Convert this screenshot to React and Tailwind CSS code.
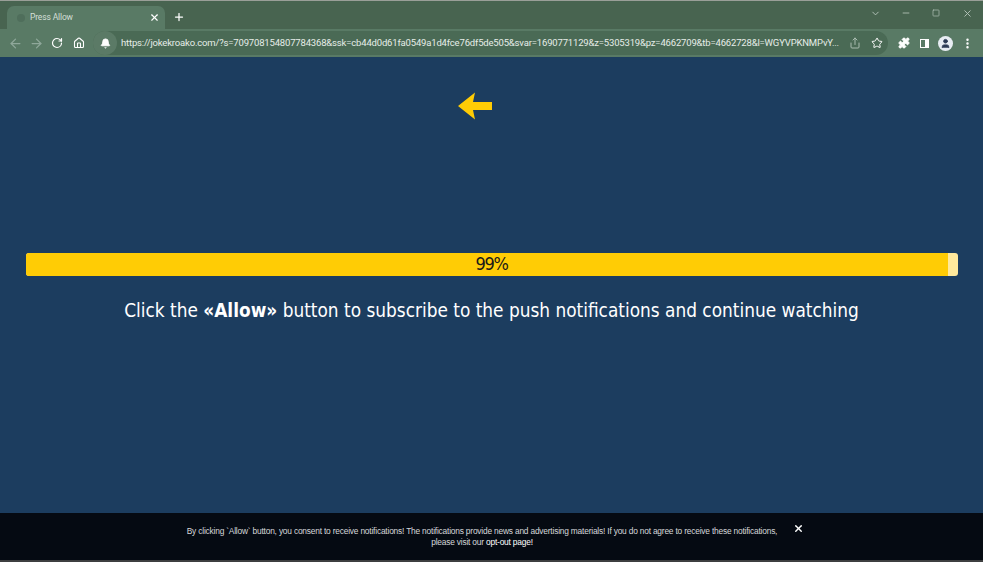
import React from "react";
import { ArrowLeft, ArrowRight, RotateCw, Home, Bell, Star, Share, Puzzle, X, Plus, ChevronDown, Minus, Square, MoreVertical, User } from "lucide-react";

function Toolbar() {
  return (
    <div className="h-[28px] bg-[#597a65] flex items-center shrink-0">
      <div className="flex items-center w-[93px] shrink-0 pl-[8px] gap-[6px]">
        <ArrowLeft className="w-[15px] h-[15px] text-[#8fa89a]" strokeWidth={2} />
        <ArrowRight className="w-[15px] h-[15px] text-[#8fa89a]" strokeWidth={2} />
        <RotateCw className="w-[12px] h-[12px] text-white ml-[1px]" strokeWidth={2.4} />
        <Home className="w-[12px] h-[12px] text-white ml-[4px]" strokeWidth={2.2} />
      </div>
      <div className="w-[795px] shrink-0 h-[24px] rounded-full bg-[#4a6a55] flex items-center">
        <div className="w-[24px] h-[24px] rounded-full bg-[#5b7a66] flex items-center justify-center shrink-0">
          <Bell className="w-[11px] h-[11px] text-white" fill="white" />
        </div>
        <div className="ml-[4px] w-[722px] shrink-0 whitespace-nowrap overflow-hidden text-[9.5px] tracking-[-0.17px] text-[#e6ede8] font-['Roboto',sans-serif]">
          https://jokekroako.com/?s=709708154807784368&amp;ssk=cb44d0d61fa0549a1d4fce76df5de505&amp;svar=1690771129&amp;z=5305319&amp;pz=4662709&amp;tb=4662728&amp;l=WGYVPKNMPvY...
        </div>
        <Share className="w-[12px] h-[12px] text-[#a9bcb0] ml-[6px] shrink-0" />
        <Star className="w-[12px] h-[12px] text-white ml-[10px] shrink-0" />
      </div>
      <div className="flex items-center ml-[10px]">
        <Puzzle className="w-[12px] h-[12px] text-white" fill="white" />
        <div className="w-[9px] h-[9px] ml-[10px] border-[1.5px] border-white border-r-[4px]" />
        <div className="w-[15px] h-[15px] ml-[9px] rounded-full bg-[#e8edf3] flex items-center justify-center">
          <User className="w-[11px] h-[11px] text-[#2c3a55]" fill="#2c3a55" />
        </div>
        <MoreVertical className="w-[13px] h-[13px] text-white ml-[8px]" strokeWidth={2.5} />
      </div>
    </div>
  );
}

export default function App() {
  return (
    <div className="h-[562px] w-[983px] overflow-hidden flex flex-col bg-[#3e3f40] font-['Liberation_Sans',sans-serif]">
      <div className="h-[1px] bg-[#9a9f98] shrink-0" />
      <div className="h-[28px] bg-[#486450] flex items-end shrink-0 pl-[7px]">
        <div className="w-[158px] h-[23px] bg-[#597a65] rounded-t-[7px] flex items-center pl-[10px] pr-[5px] text-[#d3dfd7] text-[8.5px] tracking-[-0.15px] font-['Roboto',sans-serif]">
          <div className="w-[8px] h-[8px] rounded-full bg-[#4f6e5b] mr-[5px] shrink-0" />
          <span className="flex-1">Press Allow</span>
          <X className="w-[11px] h-[11px] text-white" strokeWidth={2.5} />
        </div>
        <Plus className="w-[12px] h-[12px] text-white ml-[8px] mb-[6px]" strokeWidth={2.5} />
        <div className="flex-1 flex items-center justify-end h-full pb-[4px] text-[#b7c6bc]">
          <ChevronDown className="w-[11px] h-[11px] mr-[20px]" />
          <Minus className="w-[10px] h-[10px] mr-[21px]" />
          <Square className="w-[8px] h-[8px] mr-[22px]" />
          <X className="w-[11px] h-[11px] mr-[10px]" />
        </div>
      </div>
      <Toolbar />
      <main className="flex-1 min-h-0 bg-[#1c3d5f] flex flex-col items-center">
        <svg className="w-[34px] h-[28px] mt-[35px] -ml-[33px] shrink-0" viewBox="0 0 34 28">
          <path d="M0 14 L17 0.5 L15 10 H34 V18 H15 L17 27.5 Z" fill="#ffcc05" />
        </svg>
        <div className="relative w-[932px] h-[23px] mt-[133px] shrink-0 rounded-[3px] bg-[#ffe99c] overflow-hidden">
          <div className="h-full w-[99%] bg-[#ffcc05]" />
          <div className="absolute inset-0 flex items-center justify-center pb-[2px] text-[18px] tracking-[-1.3px] text-[#1a1a1a] font-['DejaVu_Sans_Condensed','DejaVu_Sans',sans-serif]">99%</div>
        </div>
        <p className="mt-[20px] text-white text-[18.86px] leading-[28px] whitespace-nowrap font-['DejaVu_Sans_Condensed','DejaVu_Sans',sans-serif]">
          Click the <strong className="font-bold">«Allow»</strong> button to subscribe to the push notifications and continue watching
        </p>
      </main>
      <footer className="h-[47px] shrink-0 bg-[#050a12] flex justify-center pt-[13px] mb-[2px]">
        <p className="w-[600px] ml-[3px] text-center text-[8.4px] tracking-[-0.2px] leading-[11px] text-[#d6d8da]">
          By clicking `Allow` button, you consent to receive notifications! The notifications provide news and advertising materials! If you do not agree to receive these notifications, please visit our <strong className="font-normal text-white">opt-out page!</strong>
        </p>
        <X className="w-[11px] h-[11px] text-white ml-[11px] mt-[-3px] shrink-0" strokeWidth={3} />
      </footer>
    </div>
  );
}
